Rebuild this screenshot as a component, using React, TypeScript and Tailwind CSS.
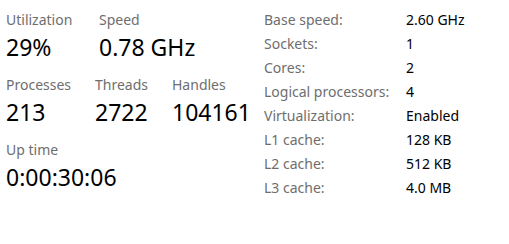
import React from 'react';

const stats = [
  [
    { label: 'Utilization', value: '29%', w: 'w-[93px]' },
    { label: 'Speed', value: '0.78 GHz', w: 'w-[120px]' },
  ],
  [
    { label: 'Processes', value: '213', w: 'w-[89px]' },
    { label: 'Threads', value: '2722', w: 'w-[77px]' },
    { label: 'Handles', value: '104161', w: 'w-[80px]' },
  ],
  [{ label: 'Up time', value: '0:00:30:06', w: 'w-[150px]' }],
];

const specs: [string, string][] = [
  ['Base speed:', '2.60 GHz'],
  ['Sockets:', '1'],
  ['Cores:', '2'],
  ['Logical processors:', '4'],
  ['Virtualization:', 'Enabled'],
  ['L1 cache:', '128 KB'],
  ['L2 cache:', '512 KB'],
  ['L3 cache:', '4.0 MB'],
];

export default function App() {
  return (
    <div className="w-[509px] h-[244px] bg-white flex font-['Noto_Sans',sans-serif] text-black">
      {/* left: big counters */}
      <div className="w-[264px] pl-[6px] pt-[8px] flex flex-col">
        {stats.map((row, i) => (
          <div key={i} className="flex h-[65px]">
            {row.map((s) => (
              <div key={s.label} className={`${s.w} flex flex-col`}>
                <div className="text-[14px] leading-[24px] text-[#6e6e6e]">{s.label}</div>
                <div className="text-[23px] leading-[31px]">{s.value}</div>
              </div>
            ))}
          </div>
        ))}
      </div>
      {/* right: spec table */}
      <div className="pt-[8px] flex flex-col">
        {specs.map(([k, v]) => (
          <div key={k} className="flex h-[24px] text-[14px] leading-[24px]">
            <div className="w-[142px] text-[#6e6e6e]">{k}</div>
            <div>{v}</div>
          </div>
        ))}
      </div>
    </div>
  );
}
